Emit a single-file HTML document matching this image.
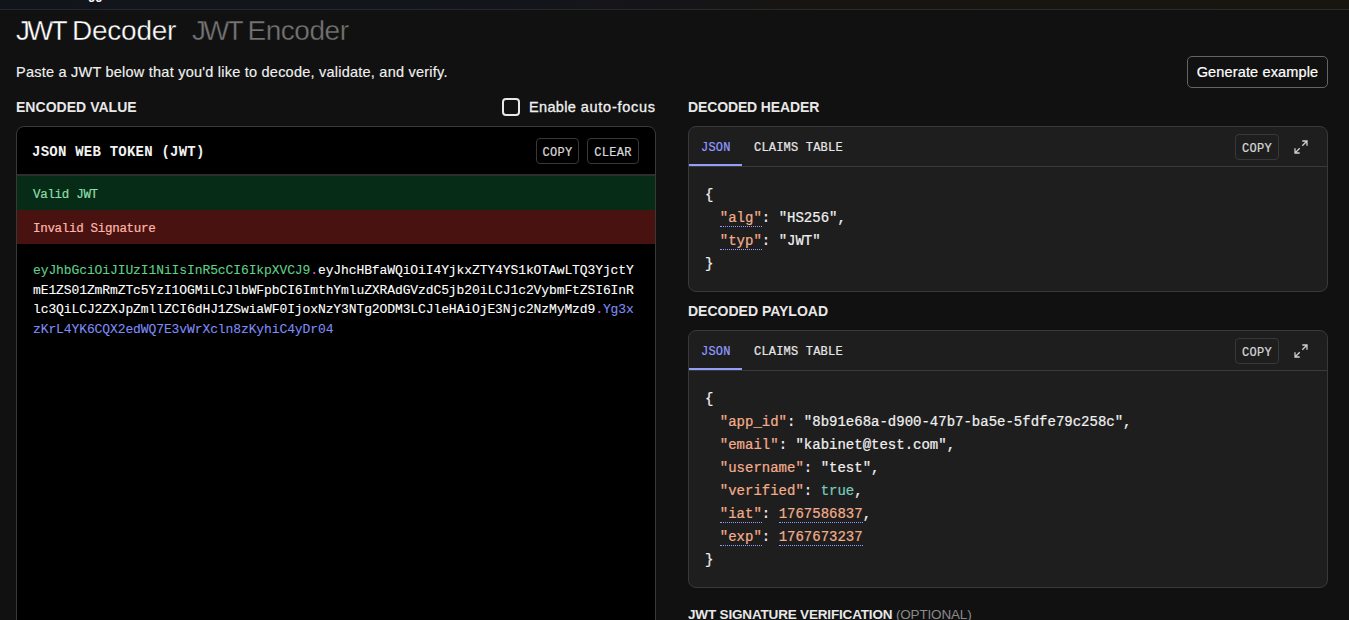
<!DOCTYPE html>
<html lang="en">
<head>
<meta charset="utf-8">
<title>JWT Decoder</title>
<style>
*{box-sizing:border-box;margin:0;padding:0}
html,body{width:1349px;height:620px;overflow:hidden;background:#111111;color:#f5f5f5;font-family:"Liberation Sans",sans-serif}
.abs{position:absolute;white-space:nowrap}
.mono{font-family:"Liberation Mono",monospace;-webkit-text-stroke:.22px currentColor}
#topbar{left:0;top:0;width:1349px;height:9px;background:linear-gradient(90deg,#12141c 0%,#13151d 30%,#151519 48%,#161511 62%,#16150f 100%)}
#topline{left:0;top:9px;width:1349px;height:1px;background:linear-gradient(90deg,#25272f 0%,#26272e 35%,#2a2a27 62%,#2b2a25 100%)}
#gg{left:88px;top:-13px;font-size:12px;font-weight:700;color:#fff;line-height:16px}
#t1{left:16px;top:13px;font-size:28px;line-height:36px;font-weight:400;color:#fff;letter-spacing:-1.05px;-webkit-text-stroke:.35px #111}
#t2{left:192px;top:13px;font-size:28px;line-height:36px;font-weight:400;color:#747474;letter-spacing:-1.3px;-webkit-text-stroke:.35px #111}
#sub{left:16px;top:62px;font-size:14.5px;line-height:20px;color:#f0f0f0;letter-spacing:.23px;-webkit-text-stroke:.15px currentColor}
#gen{left:1187px;top:56px;width:141px;height:32px;border:1px solid #646464;border-radius:5px;font-size:14.5px;line-height:30px;text-align:center;color:#fff;letter-spacing:.15px;-webkit-text-stroke:.22px currentColor}
.wd{letter-spacing:-.45px}.jw{letter-spacing:-3px}#t1{word-spacing:.8px}#t1 .wd{letter-spacing:-.25px}#t2{word-spacing:.4px}
.lbl{font-size:14px;line-height:20px;font-weight:700;color:#e8e8e8;letter-spacing:-.13px}
#l1{left:16px;top:97px;letter-spacing:.03px}
#l2{left:688px;top:97px}
#l3{left:688px;top:301px;letter-spacing:0}
#l4{left:688px;top:605px;font-size:13.5px;letter-spacing:-.17px}
#l4 span{color:#8a8a8a;font-weight:400}
#cb{left:502px;top:98px;width:18px;height:18px;border:2px solid #e8e8e8;border-radius:4px}
#cbl{left:529px;top:97px;font-size:14.5px;line-height:20px;color:#f0f0f0;letter-spacing:.55px;-webkit-text-stroke:.3px currentColor}
#lp{left:16px;top:126px;width:640px;height:520px;background:#000;border:1px solid #393939;border-radius:8px;overflow:hidden}
#lph{left:0;top:0;width:638px;height:49px;border-bottom:2px solid #2e2e2e}
#lpt{left:15px;top:15px;font-size:14px;line-height:20px;font-weight:700;color:#f2f2f2;letter-spacing:.23px;-webkit-text-stroke:0}
.btn{border:1px solid #383838;border-radius:4px;font-size:12px;line-height:28px;text-align:center;color:#d8d8d8;letter-spacing:.3px}
#valid{left:0;top:49px;width:638px;height:34px;background:#062b17;color:#8fdba8;font-size:12.5px;line-height:39px;padding-left:16px;letter-spacing:-.3px;overflow:hidden}
#invalid{left:0;top:83px;width:638px;height:34px;background:#471210;color:#ffb4a8;font-size:12.5px;line-height:39px;padding-left:16px;letter-spacing:-.3px;overflow:hidden}
#tok{left:16px;top:134px;font-size:13px;line-height:19.67px;color:#fff;letter-spacing:-.1px;white-space:pre;-webkit-text-stroke:.1px currentColor}
.g{color:#5fd08b}.p{color:#f04fd6}.b{color:#7f8cf5}
.rp{background:#1e1e1e;border:1px solid #393939;border-radius:8px;overflow:hidden}
#r1{left:688px;top:126px;width:640px;height:166px}
#r2{left:688px;top:330px;width:640px;height:258px}
.rh{left:0;top:0;width:638px;height:40px;border-bottom:1px solid #393939}
.tab1{left:12px;top:11px;font-size:12px;line-height:20px;color:#8f9bff;letter-spacing:.2px}
.tabu{left:0;top:37px;width:53px;height:2px;background:#959ef6}
.tab2{left:65px;top:11px;font-size:12px;line-height:20px;color:#e6e6e6;letter-spacing:.2px}
.json{left:14px;top:57px;font-size:14px;line-height:23px;color:#f0f0f0;white-space:pre}
.q{color:#f2ad8c}
.k{color:#f2ad8c;border-bottom:1px dotted #8f9bff;padding-bottom:0}
.n{color:#f2ad8c;border-bottom:1px dotted #8f9bff}
.t{color:#78cbbd}
.json i{font-style:normal;position:relative;left:2px}
</style>
</head>
<body>
<div class="abs" id="topbar"></div>
<div class="abs" id="topline"></div>
<div class="abs" id="gg">gg</div>
<div class="abs" id="t1"><span class="jw">JWT</span> <span class="wd">Decoder</span></div>
<div class="abs" id="t2"><span class="jw">JWT</span> <span class="wd">Encoder</span></div>
<div class="abs" id="sub">Paste a JWT below that you'd like to decode, validate, and verify.</div>
<div class="abs" id="gen">Generate example</div>

<div class="abs lbl" id="l1">ENCODED VALUE</div>
<div class="abs" id="cb"></div>
<div class="abs" id="cbl"><span style="letter-spacing:.33px">Enable</span> <span style="letter-spacing:.73px">auto-focus</span></div>

<div class="abs" id="lp">
  <div class="abs" id="lph"></div>
  <div class="abs mono" id="lpt">JSON WEB TOKEN (JWT)</div>
  <div class="abs mono btn" style="left:519px;top:11px;width:43px;height:26px">COPY</div>
  <div class="abs mono btn" style="left:570px;top:11px;width:52px;height:26px">CLEAR</div>
  <div class="abs mono" id="valid">Valid JWT</div>
  <div class="abs mono" id="invalid">Invalid Signature</div>
  <div class="abs mono" id="tok"><span class="g">eyJhbGciOiJIUzI1NiIsInR5cCI6IkpXVCJ9</span><span class="p">.</span>eyJhcHBfaWQiOiI4YjkxZTY4YS1kOTAwLTQ3YjctY
mE1ZS01ZmRmZTc5YzI1OGMiLCJlbWFpbCI6ImthYmluZXRAdGVzdC5jb20iLCJ1c2VybmFtZSI6InR
lc3QiLCJ2ZXJpZmllZCI6dHJ1ZSwiaWF0IjoxNzY3NTg2ODM3LCJleHAiOjE3Njc2NzMyMzd9<span class="p">.</span><span class="b">Yg3x
zKrL4YK6CQX2edWQ7E3vWrXcln8zKyhiC4yDr04</span></div>
</div>

<div class="abs lbl" id="l2">DECODED HEADER</div>
<div class="abs rp" id="r1">
  <div class="abs rh"></div>
  <div class="abs mono tab1">JSON</div>
  <div class="abs tabu"></div>
  <div class="abs mono tab2">CLAIMS TABLE</div>
  <div class="abs mono btn" style="left:546px;top:7px;width:44px;height:26px">COPY</div>
  <svg class="abs" style="left:605px;top:13px" width="14" height="14" viewBox="0 0 14 14" fill="none" stroke="#d0d0d0" stroke-width="1.3"><path d="M8.3 5.7L13 1M8.3 1H13v4.7M5.7 8.3L1 13M1 8.3V13h4.7"/></svg>
  <div class="abs mono json"><i>{</i>
  <span class="k">"alg"</span>: "HS256",
  <span class="k">"typ"</span>: "JWT"
<i>}</i></div>
</div>

<div class="abs lbl" id="l3">DECODED PAYLOAD</div>
<div class="abs rp" id="r2">
  <div class="abs rh"></div>
  <div class="abs mono tab1">JSON</div>
  <div class="abs tabu"></div>
  <div class="abs mono tab2">CLAIMS TABLE</div>
  <div class="abs mono btn" style="left:546px;top:7px;width:44px;height:26px">COPY</div>
  <svg class="abs" style="left:605px;top:13px" width="14" height="14" viewBox="0 0 14 14" fill="none" stroke="#d0d0d0" stroke-width="1.3"><path d="M8.3 5.7L13 1M8.3 1H13v4.7M5.7 8.3L1 13M1 8.3V13h4.7"/></svg>
  <div class="abs mono json"><i>{</i>
  <span class="q">"app_id"</span>: "8b91e68a-d900-47b7-ba5e-5fdfe79c258c",
  <span class="q">"email"</span>: "kabinet@test.com",
  <span class="q">"username"</span>: "test",
  <span class="q">"verified"</span>: <span class="t">true</span>,
  <span class="k">"iat"</span>: <span class="n">1767586837</span>,
  <span class="k">"exp"</span>: <span class="n">1767673237</span>
<i>}</i></div>
</div>

<div class="abs lbl" id="l4">JWT SIGNATURE VERIFICATION <span>(OPTIONAL)</span></div>
</body>
</html>
